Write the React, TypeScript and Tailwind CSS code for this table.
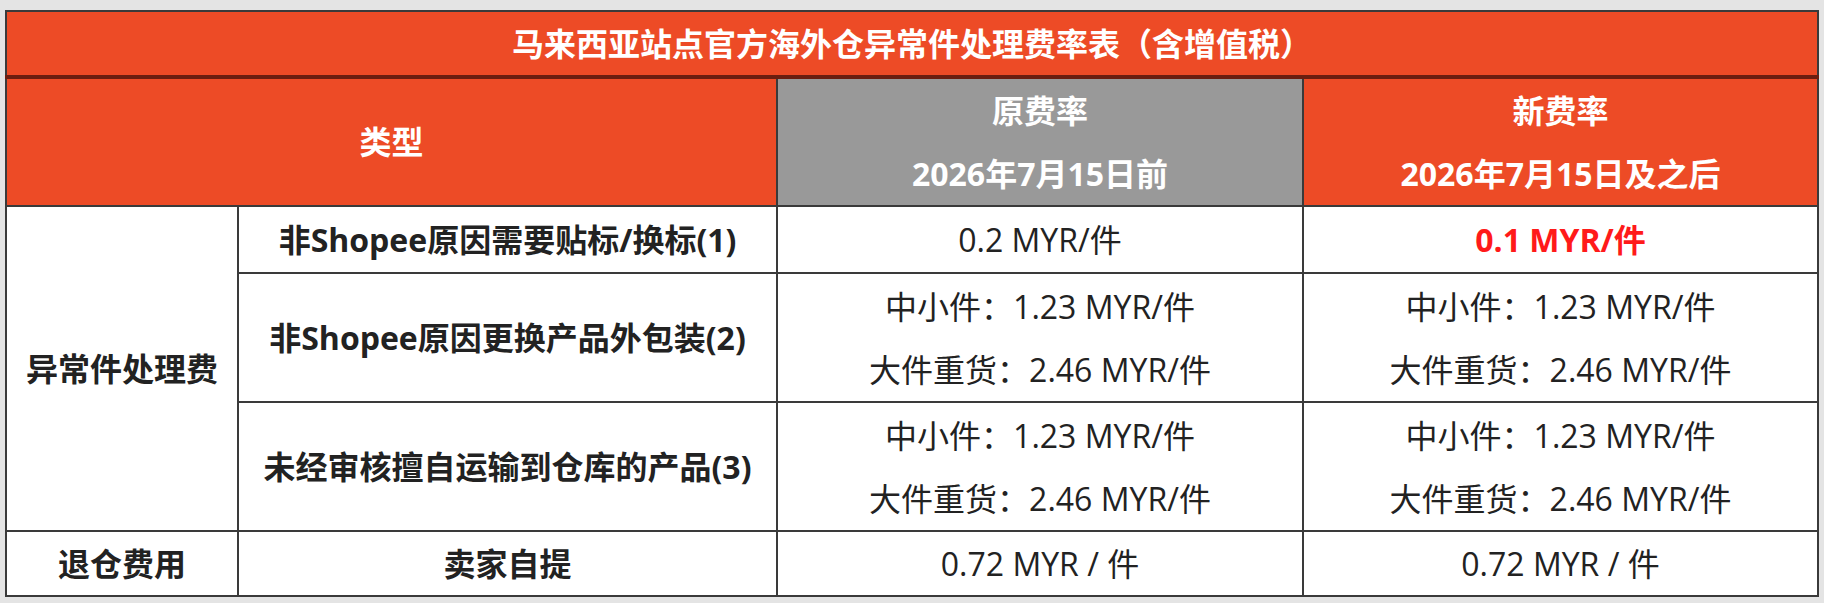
const font = { fontFamily: '"Open Sans", "Noto Sans CJK SC", sans-serif' };

const rows = [
  {
    id: 'label',
    name: '非Shopee原因需要贴标/换标(1)',
    oldRate: ['0.2 MYR/件'],
    newRate: ['0.1 MYR/件'],
    highlight: true,
  },
  {
    id: 'repack',
    name: '非Shopee原因更换产品外包装(2)',
    oldRate: ['中小件：1.23 MYR/件', '大件重货：2.46 MYR/件'],
    newRate: ['中小件：1.23 MYR/件', '大件重货：2.46 MYR/件'],
  },
  {
    id: 'unapproved',
    name: '未经审核擅自运输到仓库的产品(3)',
    oldRate: ['中小件：1.23 MYR/件', '大件重货：2.46 MYR/件'],
    newRate: ['中小件：1.23 MYR/件', '大件重货：2.46 MYR/件'],
  },
];

const cell = "border-2 border-[#3a3a3a] text-center align-middle";

function Lines({ items, className = "" }: { items: string[]; className?: string }) {
  return (
    <div className={`flex flex-col ${className}`}>
      {items.map((t) => (
        <span key={t} className="leading-[63px]">{t}</span>
      ))}
    </div>
  );
}

export default function App() {
  return (
    <div className="w-[1824px] h-[603px] bg-[#e4e4e4] pl-[5px] pt-[10px]" style={font}>
      <table className="table-fixed border-collapse w-[1812px] bg-white text-[#222222] text-[32px]">
        <colgroup>
          <col className="w-[232px]" />
          <col className="w-[539px]" />
          <col className="w-[526px]" />
          <col className="w-[515px]" />
        </colgroup>
        <tbody>
          {/* Title */}
          <tr className="h-[66px]">
            <td
              colSpan={4}
              className="border-2 border-[#3a3a3a] border-b-4 border-b-[#6b1e10] bg-[#ed4b26] text-white font-bold text-center text-[32px]"
            >
              马来西亚站点官方海外仓异常件处理费率表（含增值税）
            </td>
          </tr>

          {/* Header */}
          <tr className="h-[128px]">
            <td colSpan={2} className={`${cell} bg-[#ed4b26] text-white font-bold`}>
              类型
            </td>
            <td className={`${cell} bg-[#999999] text-white font-bold`}>
              <Lines items={['原费率', '2026年7月15日前']} />
            </td>
            <td className={`${cell} bg-[#ed4b26] text-white font-bold`}>
              <Lines items={['新费率', '2026年7月15日及之后']} />
            </td>
          </tr>

          {/* Exception handling rows */}
          {rows.map((row, i) => (
            <tr key={row.id} className={row.highlight ? "h-[67px]" : "h-[129px]"}>
              {i === 0 && (
                <td rowSpan={3} className={`${cell} font-bold`}>
                  异常件处理费
                </td>
              )}
              <td className={`${cell} font-bold`}>{row.name}</td>
              <td className={cell}>
                <Lines items={row.oldRate} className="leading-none" />
              </td>
              <td className={cell}>
                <Lines
                  items={row.newRate}
                  className={row.highlight ? "text-[#ff1a1a] font-bold" : ""}
                />
              </td>
            </tr>
          ))}

          {/* Return fee */}
          <tr className="h-[65px]">
            <td className={`${cell} font-bold`}>退仓费用</td>
            <td className={`${cell} font-bold`}>卖家自提</td>
            <td className={cell}>0.72 MYR / 件</td>
            <td className={cell}>0.72 MYR / 件</td>
          </tr>
        </tbody>
      </table>
    </div>
  );
}
